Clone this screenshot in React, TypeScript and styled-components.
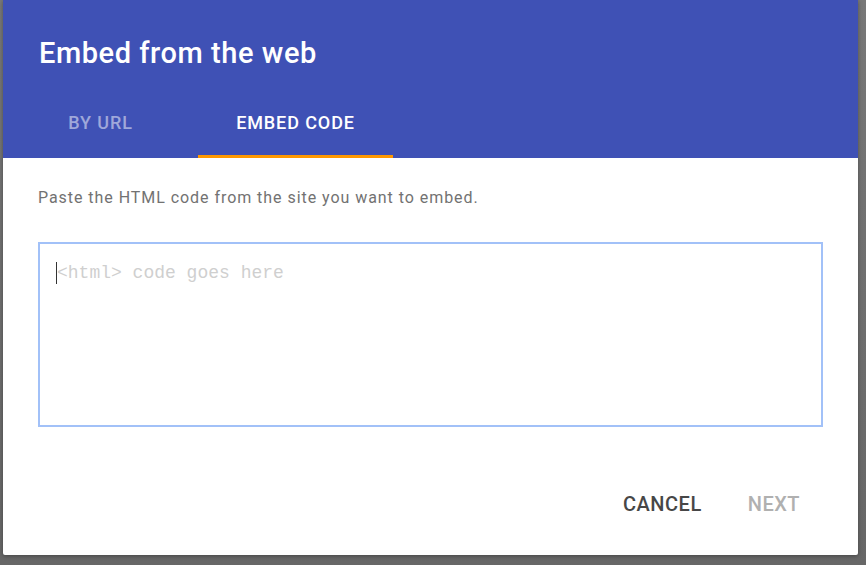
import React from "react";
import styled, { createGlobalStyle } from "styled-components";

const Global = createGlobalStyle`
  html, body { margin: 0; padding: 0; }
  body {
    background: #6b6b6b;
    width: 866px;
    height: 565px;
    overflow: hidden;
    font-family: Roboto, "Liberation Sans", sans-serif;
  }
`;

const Backdrop = styled.div`
  width: 866px;
  height: 565px;
  padding: 0 0 0 3px;
  box-sizing: border-box;
  background: linear-gradient(#787878, #676767);
`;

const Dialog = styled.div`
  width: 855px;
  height: 555px;
  background: #fff;
  border-radius: 0 0 2px 2px;
  box-shadow: 0 1px 4px rgba(0, 0, 0, 0.35);
  display: flex;
  flex-direction: column;
  overflow: hidden;
`;

const Header = styled.div`
  background: #3f51b5;
  height: 158px;
  display: flex;
  flex-direction: column;
  box-sizing: border-box;
`;

const Title = styled.h1`
  margin: 0;
  padding: 35px 0 0 36px;
  height: 88px;
  box-sizing: border-box;
  color: #fff;
  font-size: 29px;
  font-weight: 500;
  letter-spacing: 0.55px;
  line-height: 36px;
`;

const Tabs = styled.div`
  display: flex;
  height: 70px;
`;

const Tab = styled.div<{ $active?: boolean }>`
  width: 195px;
  display: flex;
  align-items: center;
  justify-content: center;
  padding-top: 2px;
  box-sizing: border-box;
  font-size: 18px;
  font-weight: 500;
  letter-spacing: 0.9px;
  color: ${(p) => (p.$active ? "#fff" : "rgba(255,255,255,0.5)")};
  border-bottom: 3px solid ${(p) => (p.$active ? "#ff9800" : "transparent")};
`;

const Body = styled.div`
  flex: 1;
  padding: 30px 35px 0 35px;
  display: flex;
  flex-direction: column;
`;

const Hint = styled.p`
  margin: 0;
  font-size: 16px;
  letter-spacing: 0.95px;
  color: #727272;
  line-height: 20px;
`;

const Field = styled.div`
  margin-top: 34px;
  height: 185px;
  border: 2px solid #a2c1f8;
  box-sizing: border-box;
  padding: 18px 0 0 16px;
  display: flex;
  align-items: flex-start;
`;

const Caret = styled.span`
  display: inline-block;
  width: 1px;
  height: 22px;
  background: #333;
`;

const Placeholder = styled.span`
  font-family: "Liberation Mono", "DejaVu Sans Mono", monospace;
  font-size: 18px;
  line-height: 22px;
  color: #cfcfcf;
`;

const Actions = styled.div`
  display: flex;
  justify-content: flex-end;
  gap: 46px;
  padding: 65px 23px 0 0;
`;

const Action = styled.button<{ $disabled?: boolean }>`
  background: none;
  border: none;
  padding: 0;
  font-family: Roboto, "Liberation Sans", sans-serif;
  font-size: 20px;
  font-weight: 500;
  letter-spacing: 0.5px;
  color: ${(p) => (p.$disabled ? "#b0b0b0" : "#474747")};
  cursor: pointer;
`;

export default function App() {
  return (
    <>
      <Global />
      <Backdrop>
        <Dialog>
          <Header>
            <Title>Embed from the web</Title>
            <Tabs>
              <Tab>BY URL</Tab>
              <Tab $active>EMBED CODE</Tab>
            </Tabs>
          </Header>
          <Body>
            <Hint>Paste the HTML code from the site you want to embed.</Hint>
            <Field>
              <Caret />
              <Placeholder>&lt;html&gt; code goes here</Placeholder>
            </Field>
            <Actions>
              <Action>CANCEL</Action>
              <Action $disabled>NEXT</Action>
            </Actions>
          </Body>
        </Dialog>
      </Backdrop>
    </>
  );
}
